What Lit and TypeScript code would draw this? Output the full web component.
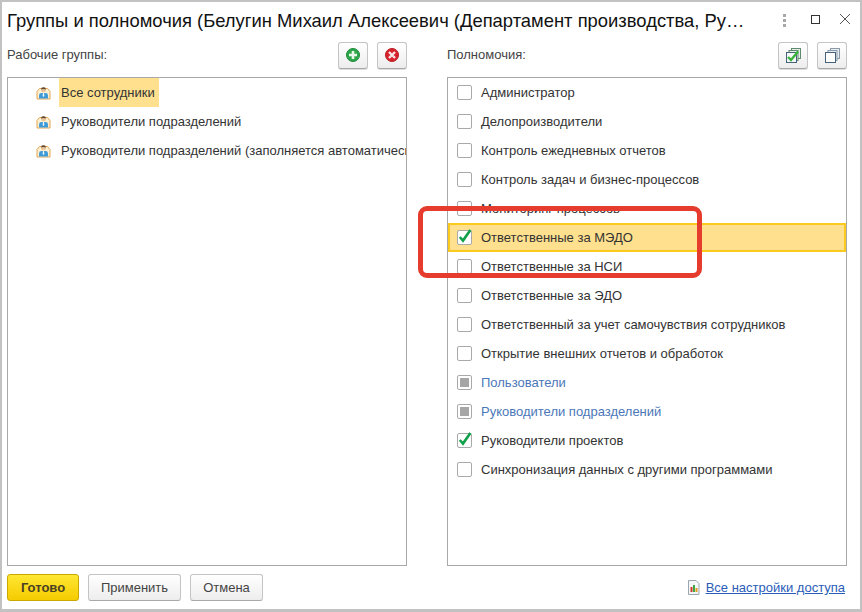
import { LitElement, html, css, svg } from "lit";
import { customElement } from "lit/decorators.js";

const CHECK = svg`<path d="M1.8 6 L5 9.6 L12.4 -1" fill="none" stroke="#10a04a" stroke-width="2.6"/>`;

type Perm = { t: string; s?: "on" | "mixed"; blue?: boolean; active?: boolean };
const PERMS: Perm[] = [
  { t: "Администратор" },
  { t: "Делопроизводители" },
  { t: "Контроль ежедневных отчетов" },
  { t: "Контроль задач и бизнес-процессов" },
  { t: "Мониторинг процессов" },
  { t: "Ответственные за МЭДО", s: "on", active: true },
  { t: "Ответственные за НСИ" },
  { t: "Ответственные за ЭДО" },
  { t: "Ответственный за учет самочувствия сотрудников" },
  { t: "Открытие внешних отчетов и обработок" },
  { t: "Пользователи", s: "mixed", blue: true },
  { t: "Руководители подразделений", s: "mixed", blue: true },
  { t: "Руководители проектов", s: "on" },
  { t: "Синхронизация данных с другими программами" },
];
const GROUPS = ["Все сотрудники", "Руководители подразделений", "Руководители подразделений (заполняется автоматически)"];

@customElement("app-root")
export class AppRoot extends LitElement {
  static styles = css`
    :host { display: block; width: 862px; height: 612px; font-family: "Liberation Sans", Arial, sans-serif; color: #333; position: relative; overflow: hidden; }
    .win { box-sizing: border-box; width: 862px; height: 612px; border: solid #c2c2c2; border-width: 2px 2px 3px 2px; background: #fff; display: flex; flex-direction: column; padding: 0 13px 0 5px; }
    .title { height: 37px; display: flex; align-items: center; margin-right: -13px; }
    .title h1 { margin: 0; font-weight: 400; font-size: 18.4px; color: #111; width: 745px; white-space: nowrap; overflow: hidden; text-overflow: ellipsis; flex: none; }
    .winbtns { margin-left: auto; display: flex; align-items: center; }
    .winbtns svg { display: block; }
    .cols { display: flex; gap: 40px; flex: none; }
    .col { width: 400px; flex: none; }
    .head { display: flex; align-items: center; height: 28px; margin-top: 2px; margin-bottom: 8px; }
    .head .lbl { font-size: 13px; color: #444; flex: 1; position: relative; top: -1px; }
    .head .tools { display: flex; gap: 9px; }
    .tool { box-sizing: border-box; width: 30px; height: 27px; border: 1px solid #c4c4c4; border-bottom-color: #a8a8a8; border-radius: 3px; background: linear-gradient(#fff, #ededed); display: flex; align-items: center; justify-content: center; box-shadow: 0 1px 0 #ddd; }
    .box { box-sizing: border-box; height: 489px; border: 1px solid #a8a8a8; overflow: hidden; background: #fff; }
    .row { height: 29px; display: flex; align-items: center; font-size: 13px; color: #333; white-space: nowrap; }
    .grp { padding-left: 28px; }
    .grp svg { flex: none; margin-right: 8px; }
    .grp .txt { height: 29px; line-height: 29px; padding: 0 2px; }
    .grp .txt.sel { background: #fee08e; padding-right: 4px; }
    .perm { padding-left: 9px; }
    .perm .cb { flex: none; box-sizing: border-box; width: 15px; height: 15px; border: 1px solid #a9a9a9; border-radius: 2px; background: #fff; margin-right: 9px; display: flex; align-items: center; justify-content: center; }
    .perm .cb svg { display: block; overflow: visible; }
    .perm .cb i { display: block; width: 9px; height: 9px; background: #a6a6a6; }
    .perm.blue { color: #4b77b8; }
    .perm.active { box-sizing: border-box; background: #fee08e; border: 2px solid #fcc91f; padding-left: 7px; }
    .foot { display: flex; align-items: center; gap: 9px; margin-top: 8px; height: 27px; }
    .btn { box-sizing: border-box; height: 27px; display: flex; align-items: center; justify-content: center; font-size: 13px; color: #444; border: 1px solid #c4c4c4; border-bottom-color: #a8a8a8; border-radius: 3px; background: linear-gradient(#fff, #ededed); }
    .btn.ok { width: 72px; background: linear-gradient(#ffe733, #f5cb00); border-color: #c9a800; font-weight: 700; color: #4a4024; }
    .btn.ap { width: 93px; }
    .btn.ca { width: 73px; }
    .link { margin-left: auto; display: flex; align-items: center; gap: 6px; font-size: 13px; color: #2a5cb8; margin-right: 2px; }
    .link span { text-decoration: underline; }
    .mark { position: absolute; left: 418px; top: 206px; width: 284px; height: 72px; box-sizing: border-box; border: 5px solid #e53c2e; border-radius: 9px; pointer-events: none; }
  `;

  private group() {
    return html`<svg width="15" height="14" viewBox="0 0 15 14">
      <path d="M1 5.5 L3.5 2.5 H11.5 L14 5.5 V13 H1 Z" fill="#fdf0d2" stroke="#e2a552"/>
      <circle cx="7.5" cy="3.8" r="2.5" fill="#e9c49a"/>
      <path d="M5 3.6 Q5 1.2 7.5 1.2 Q10 1.2 10 3.6 Q7.5 2.4 5 3.6 Z" fill="#5f4630"/>
      <path d="M3 12.5 V9.4 Q3 7 5.5 7 H9.5 Q12 7 12 9.4 V12.5 Z" fill="#3f9bd8"/>
      <path d="M7 7 h1 l.4 3 -.9 1 -.9 -1 Z" fill="#eef7fc"/>
    </svg>`;
  }

  render() {
    return html`<div class="win">
      <div class="title">
        <h1>Группы и полномочия (Белугин Михаил Алексеевич (Департамент производства, Руководитель)</h1>
        <div class="winbtns">
          <svg width="88" height="20" viewBox="0 0 88 20">
            <g fill="#a8a8a8"><rect x="11" y="3" width="3" height="3"/><rect x="11" y="8" width="3" height="3"/><rect x="11" y="13" width="3" height="3"/></g>
            <rect x="39.5" y="4.5" width="8" height="8" fill="none" stroke="#333"/>
            <path d="M68 3 L78 13 M78 3 L68 13" stroke="#555" fill="none"/>
          </svg>
        </div>
      </div>
      <div class="cols">
        <div class="col">
          <div class="head"><div class="lbl">Рабочие группы:</div>
            <div class="tools">
              <div class="tool"><svg width="16" height="16" viewBox="0 0 16 16"><circle cx="8" cy="8" r="6.5" fill="#2da64a" stroke="#1c8a38"/><path d="M8 4 V12 M4 8 H12" stroke="#e9f7e9" stroke-width="2.6"/></svg></div>
              <div class="tool"><svg width="16" height="16" viewBox="0 0 16 16"><circle cx="8" cy="8" r="6.5" fill="#d8232c" stroke="#b81a22"/><path d="M5 5 L11 11 M11 5 L5 11" stroke="#f7e4e4" stroke-width="2.4"/></svg></div>
            </div>
          </div>
          <div class="box">
            ${GROUPS.map((g, i) => html`<div class="row grp">${this.group()}<span class="txt ${i === 0 ? "sel" : ""}">${g}</span></div>`)}
          </div>
        </div>
        <div class="col">
          <div class="head"><div class="lbl">Полномочия:</div>
            <div class="tools">
              <div class="tool"><svg width="17" height="17" viewBox="0 0 17 17">
                <rect x="6.5" y="1.5" width="9" height="10" fill="#e4efe6" stroke="#5f8a70"/>
                <rect x="4" y="3.5" width="9" height="10" fill="#e4efe6" stroke="#5f8a70"/>
                <rect x="1.5" y="5.5" width="10" height="10" fill="#f4f8fb" stroke="#46627a"/>
                <path d="M3 10 L6 13 L13 4.5" fill="none" stroke="#39b53a" stroke-width="2.4"/>
              </svg></div>
              <div class="tool"><svg width="17" height="17" viewBox="0 0 17 17">
                <rect x="6.5" y="1.5" width="9" height="10" fill="#e8edf1" stroke="#8a9aa8"/>
                <rect x="4" y="3.5" width="9" height="10" fill="#e8edf1" stroke="#8a9aa8"/>
                <rect x="1.5" y="5.5" width="10" height="10" fill="#fff" stroke="#46627a"/>
              </svg></div>
            </div>
          </div>
          <div class="box">
            ${PERMS.map((p) => html`<div class="row perm ${p.blue ? "blue" : ""} ${p.active ? "active" : ""}">
              <span class="cb">${p.s === "on" ? html`<svg width="13" height="13" viewBox="0 0 13 13">${CHECK}</svg>` : p.s === "mixed" ? html`<i></i>` : ""}</span>
              <span>${p.t}</span></div>`)}
          </div>
        </div>
      </div>
      <div class="foot">
        <div class="btn ok">Готово</div>
        <div class="btn ap">Применить</div>
        <div class="btn ca">Отмена</div>
        <div class="link">
          <svg width="13" height="15" viewBox="0 0 13 15"><path d="M1.5 .5 H9 L12 3.5 V14.5 H1.5 Z" fill="#f4f6f8" stroke="#9aa6b0"/><rect x="3.5" y="7" width="2" height="5" fill="#d0392b"/><rect x="6" y="5" width="2" height="7" fill="#3aa648"/><rect x="8.5" y="8" width="2" height="4" fill="#e0a020"/></svg>
          <span>Все настройки доступа</span>
        </div>
      </div>
    </div>
    <div class="mark"></div>`;
  }
}
